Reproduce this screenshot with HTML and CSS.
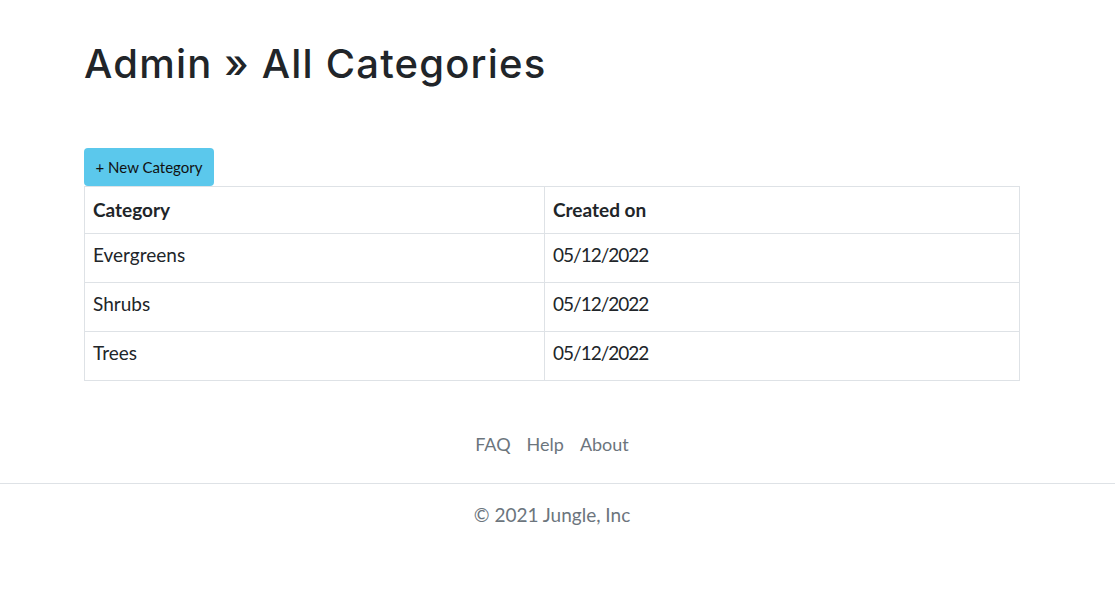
FILE: index.html
```html
<!DOCTYPE html>
<html lang="en">
<head>
<meta charset="utf-8">
<title>Admin » All Categories</title>
<link rel="stylesheet" href="styles.css">
</head>
<body>
<main class="container">
  <h1 class="page-title">Admin » All Categories</h1>
  <a class="btn-new" href="#">+ New Category</a>
  <table class="cat-table">
    <thead>
      <tr><th>Category</th><th>Created on</th></tr>
    </thead>
    <tbody>
      <tr><td>Evergreens</td><td class="date">05/12/2022</td></tr>
      <tr><td>Shrubs</td><td class="date">05/12/2022</td></tr>
      <tr><td>Trees</td><td class="date">05/12/2022</td></tr>
    </tbody>
  </table>
</main>
<footer class="site-footer">
  <nav class="footer-links container-inner">
    <a href="#">FAQ</a>
    <a href="#">Help</a>
    <a href="#">About</a>
  </nav>
  <div class="footer-bottom">
    <p class="copyright container-inner">© 2021 Jungle, Inc</p>
  </div>
</footer>
</body>
</html>
```

FILE: styles.css
```css
html, body {
  margin: 0;
  padding: 0;
  background: #fff;
}
body {
  font-family: Lato, "Noto Sans", sans-serif;
  color: #212529;
}
.container {
  width: 936px;
  margin-left: 84px;
  padding-top: 38px;
}
.container-inner {
  width: 936px;
  margin-left: 84px;
}
.page-title {
  font-family: Inter, "DejaVu Sans", sans-serif;
  font-weight: 500;
  font-size: 40px;
  line-height: 52px;
  margin: 0 0 58px 0;
  color: #212529;
  letter-spacing: 1.2px;
}
.btn-new {
  display: inline-block;
  box-sizing: border-box;
  height: 38px;
  width: 130px;
  line-height: 38px;
  text-align: center;
  background: #5bc8ec;
  color: #111;
  font-size: 15px;
  text-decoration: none;
  border-radius: 4px;
  vertical-align: top;
}
.cat-table {
  width: 936px;
  border-collapse: collapse;
  font-size: 19px;
  margin-top: 0;
}
.cat-table th, .cat-table td {
  border: 1px solid #dee2e6;
  text-align: left;
  box-sizing: border-box;
}
.cat-table th {
  font-weight: 700;
  height: 47px;
  padding: 0 8px 1px 8px;
  vertical-align: middle;
}
.cat-table td {
  height: 49px;
  padding: 8px 8px 0 8px;
  line-height: 26px;
  vertical-align: top;
}
.cat-table td.date {
  letter-spacing: -1px;
}
.cat-table th:first-child, .cat-table td:first-child {
  width: 460px;
}
.site-footer {
  margin-top: 50px;
  text-align: center;
  color: #6c757d;
  font-size: 19px;
}
.footer-links {
  display: flex;
  justify-content: center;
  gap: 16px;
  padding-bottom: 26px;
  line-height: 26px;
  font-size: 18px;
}
.footer-links a {
  color: #6c757d;
  text-decoration: none;
}
.footer-bottom {
  border-top: 1px solid #dee2e6;
}
.copyright {
  margin-top: 0;
  margin-bottom: 0;
  padding-top: 18px;
  line-height: 26px;
}
```
